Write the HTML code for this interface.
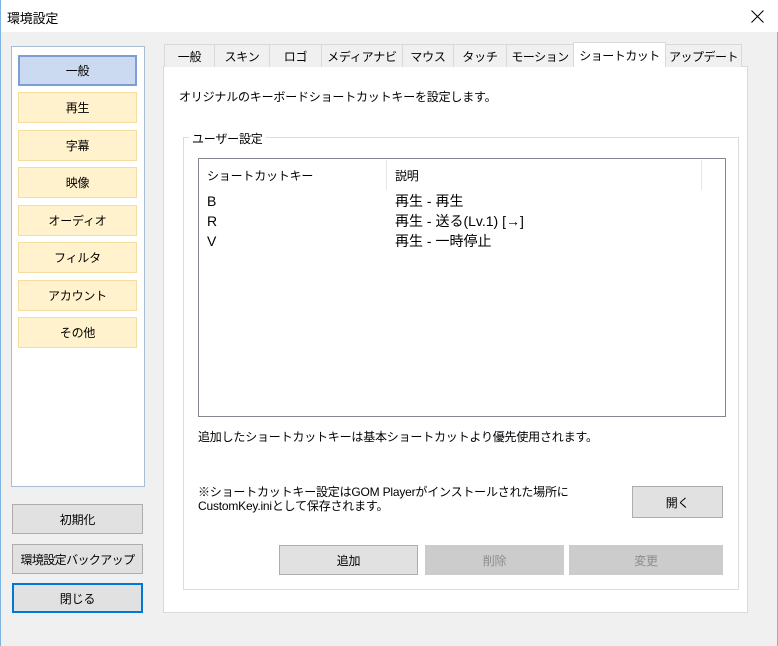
<!DOCTYPE html>
<html><head><meta charset="utf-8"><style>
*{box-sizing:border-box;margin:0;padding:0}
body{width:778px;height:646px;background:#f0f0f0;font-family:"Liberation Sans","Noto Sans CJK JP",sans-serif;font-size:12px;letter-spacing:-0.2px;color:#000;position:relative;overflow:hidden;border-left:1px solid #7fb4e0;border-right:1px solid #7fb4e0}
.a{position:absolute}
.t{white-space:nowrap}
.btn{position:absolute;display:flex;align-items:center;justify-content:center;background:#e1e1e1;border:1px solid #adadad;white-space:nowrap}
.side{position:absolute;left:17px;width:119px;height:31px;display:flex;align-items:center;justify-content:center;background:#fff2cc;border:1px solid #f7dca0}
.tab{position:absolute;top:44px;height:23px;background:#f0f0f0;border:1px solid #d9d9d9;border-bottom:none;display:flex;align-items:center;justify-content:center;white-space:nowrap}
</style></head><body>
<div class="a" style="left:0;top:0;width:778px;height:32px;background:#fff"></div>
<div class="a t" style="left:6px;top:8px;font-size:13px">環境設定</div>
<svg class="a" style="left:750px;top:10px" width="13" height="13" viewBox="0 0 13 13"><path d="M0.5 0.5L12.5 12.5M12.5 0.5L0.5 12.5" stroke="#000" stroke-width="1"/></svg>

<div class="a" style="left:10px;top:46px;width:134px;height:441px;background:#fff;border:1px solid #a8bcd4"></div>
<div class="side" style="top:55px;background:#cbdaf0;border:2px solid #7b9fd4">一般</div>
<div class="side" style="top:92px">再生</div>
<div class="side" style="top:130px">字幕</div>
<div class="side" style="top:167px">映像</div>
<div class="side" style="top:205px">オーディオ</div>
<div class="side" style="top:242px">フィルタ</div>
<div class="side" style="top:280px">アカウント</div>
<div class="side" style="top:317px">その他</div>

<div class="btn" style="left:11px;top:504px;width:131px;height:30px">初期化</div>
<div class="btn" style="left:11px;top:544px;width:131px;height:30px;letter-spacing:-0.6px">環境設定バックアップ</div>
<div class="btn" style="left:11px;top:583px;width:131px;height:30px;border:2px solid #0078d7">閉じる</div>

<div class="a" style="left:162px;top:66px;width:585px;height:547px;background:#fff;border:1px solid #d9d9d9"></div>
<div class="tab" style="left:163px;width:51px">一般</div>
<div class="tab" style="left:213px;width:56px">スキン</div>
<div class="tab" style="left:268px;width:53px">ロゴ</div>
<div class="tab" style="left:320px;width:82px">メディアナビ</div>
<div class="tab" style="left:401px;width:52px">マウス</div>
<div class="tab" style="left:452px;width:54px">タッチ</div>
<div class="tab" style="left:505px;width:68px;letter-spacing:-0.5px">モーション</div>
<div class="tab" style="left:572px;top:42px;height:25px;width:93px;background:#fff;z-index:2;letter-spacing:-0.5px">ショートカット</div>
<div class="tab" style="left:664px;width:77px;letter-spacing:-0.5px">アップデート</div>

<div class="a t" style="left:178px;top:88px">オリジナルのキーボードショートカットキーを設定します。</div>
<div class="a" style="left:182px;top:137px;width:556px;height:453px;border:1px solid #dcdcdc"></div>
<div class="a t" style="left:188px;top:130px;background:#fff;padding:0 3px">ユーザー設定</div>

<div class="a" style="left:197px;top:158px;width:528px;height:259px;border:1px solid #828790;background:#fff"></div>
<div class="a" style="left:385px;top:160px;width:1px;height:30px;background:#e5e5e5"></div>
<div class="a" style="left:700px;top:160px;width:1px;height:30px;background:#e5e5e5"></div>
<div class="a t" style="left:206px;top:167px">ショートカットキー</div>
<div class="a t" style="left:394px;top:167px">説明</div>
<div class="a t" style="left:206px;top:191px;line-height:20px;font-size:14px;letter-spacing:0">B<br>R<br>V</div>
<div class="a t" style="left:394px;top:191px;line-height:20px;font-size:14px;letter-spacing:0">再生 - 再生<br>再生 - 送る(Lv.1) [→]<br>再生 - 一時停止</div>

<div class="a t" style="left:197px;top:428px">追加したショートカットキーは基本ショートカットより優先使用されます。</div>
<div class="a t" style="left:197px;top:485px;line-height:14px">※ショートカットキー設定はGOM Playerがインストールされた場所に<br>CustomKey.iniとして保存されます。</div>
<div class="btn" style="left:631px;top:486px;width:91px;height:32px">開く</div>

<div class="btn" style="left:278px;top:545px;width:139px;height:30px">追加</div>
<div class="btn" style="left:424px;top:545px;width:139px;height:30px;background:#cccccc;border-color:#cccccc;color:#8c8c8c">削除</div>
<div class="btn" style="left:568px;top:545px;width:154px;height:30px;background:#cccccc;border-color:#cccccc;color:#8c8c8c">変更</div>
</body></html>
